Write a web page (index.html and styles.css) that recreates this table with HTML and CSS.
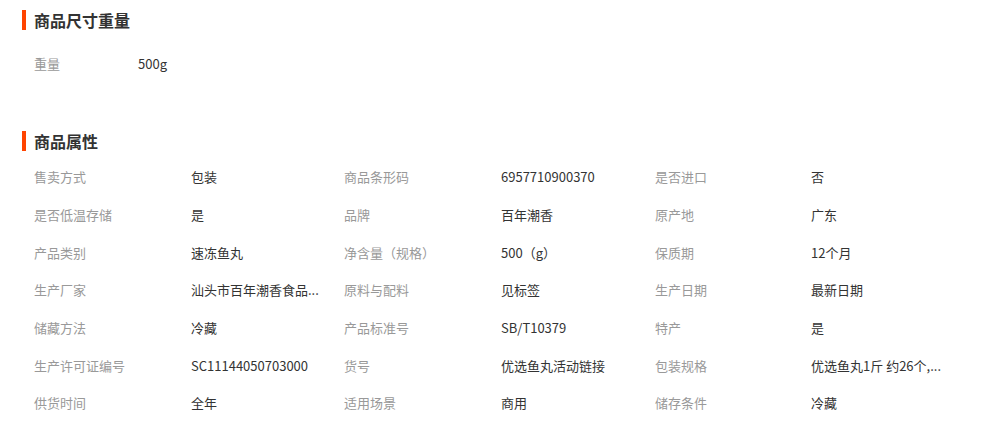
FILE: index.html
```html
<!DOCTYPE html>
<html lang="zh-CN">
<head>
    <meta charset="UTF-8">
    <title>商品参数</title>
    <link rel="stylesheet" href="styles.css">
</head>
<body>

    <div class="detail">
        <!-- 尺寸重量 -->
        <div class="section section-size">
            <h3 class="section-title">商品尺寸重量</h3>
            <div class="size-row">
                <span class="label label-short">重量</span>
                <span class="value">500g</span>
            </div>
        </div>

        <!-- 商品属性 -->
        <div class="section section-attr">
            <h3 class="section-title">商品属性</h3>
            <div class="attr-grid">
                <span class="label">售卖方式</span><span class="value">包装</span>
                <span class="label">商品条形码</span><span class="value">6957710900370</span>
                <span class="label">是否进口</span><span class="value">否</span>

                <span class="label">是否低温存储</span><span class="value">是</span>
                <span class="label">品牌</span><span class="value">百年潮香</span>
                <span class="label">原产地</span><span class="value">广东</span>

                <span class="label">产品类别</span><span class="value">速冻鱼丸</span>
                <span class="label">净含量（规格）</span><span class="value">500（g）</span>
                <span class="label">保质期</span><span class="value">12个月</span>

                <span class="label">生产厂家</span><span class="value">汕头市百年潮香食品...</span>
                <span class="label">原料与配料</span><span class="value">见标签</span>
                <span class="label">生产日期</span><span class="value">最新日期</span>

                <span class="label">储藏方法</span><span class="value">冷藏</span>
                <span class="label">产品标准号</span><span class="value">SB/T10379</span>
                <span class="label">特产</span><span class="value">是</span>

                <span class="label">生产许可证编号</span><span class="value">SC11144050703000</span>
                <span class="label">货号</span><span class="value">优选鱼丸活动链接</span>
                <span class="label">包装规格</span><span class="value">优选鱼丸1斤 约26个,...</span>

                <span class="label">供货时间</span><span class="value">全年</span>
                <span class="label">适用场景</span><span class="value">商用</span>
                <span class="label">储存条件</span><span class="value">冷藏</span>
            </div>
        </div>
    </div>

</body>
</html>
```

FILE: styles.css
```css
body {
    margin: 0;
    background-color: #fff;
    font-family: "Noto Sans CJK SC", "Noto Sans", sans-serif;
    font-size: 13px;
    color: #333;
}

.detail {
    padding: 10px 0 0 22px;
}

.section-title {
    margin: 0;
    padding-left: 8px;
    border-left: 4px solid #ff4400;
    font-size: 16px;
    font-weight: bold;
    line-height: 20px;
    height: 20px;
    color: #333;
}

.section-size {
    margin-bottom: 48px;
}

.size-row {
    display: flex;
    margin-top: 15px;
    padding-left: 12px;
    line-height: 38px;
}

.label {
    color: #999;
}

.label-short {
    width: 104px;
}

.value {
    color: #333;
    white-space: nowrap;
}

.attr-grid {
    display: grid;
    grid-template-columns: 157px 153px 157px 154px 156px 153px;
    grid-auto-rows: 37.7px;
    align-items: center;
    margin-top: 7px;
    padding-left: 12px;
}
```
